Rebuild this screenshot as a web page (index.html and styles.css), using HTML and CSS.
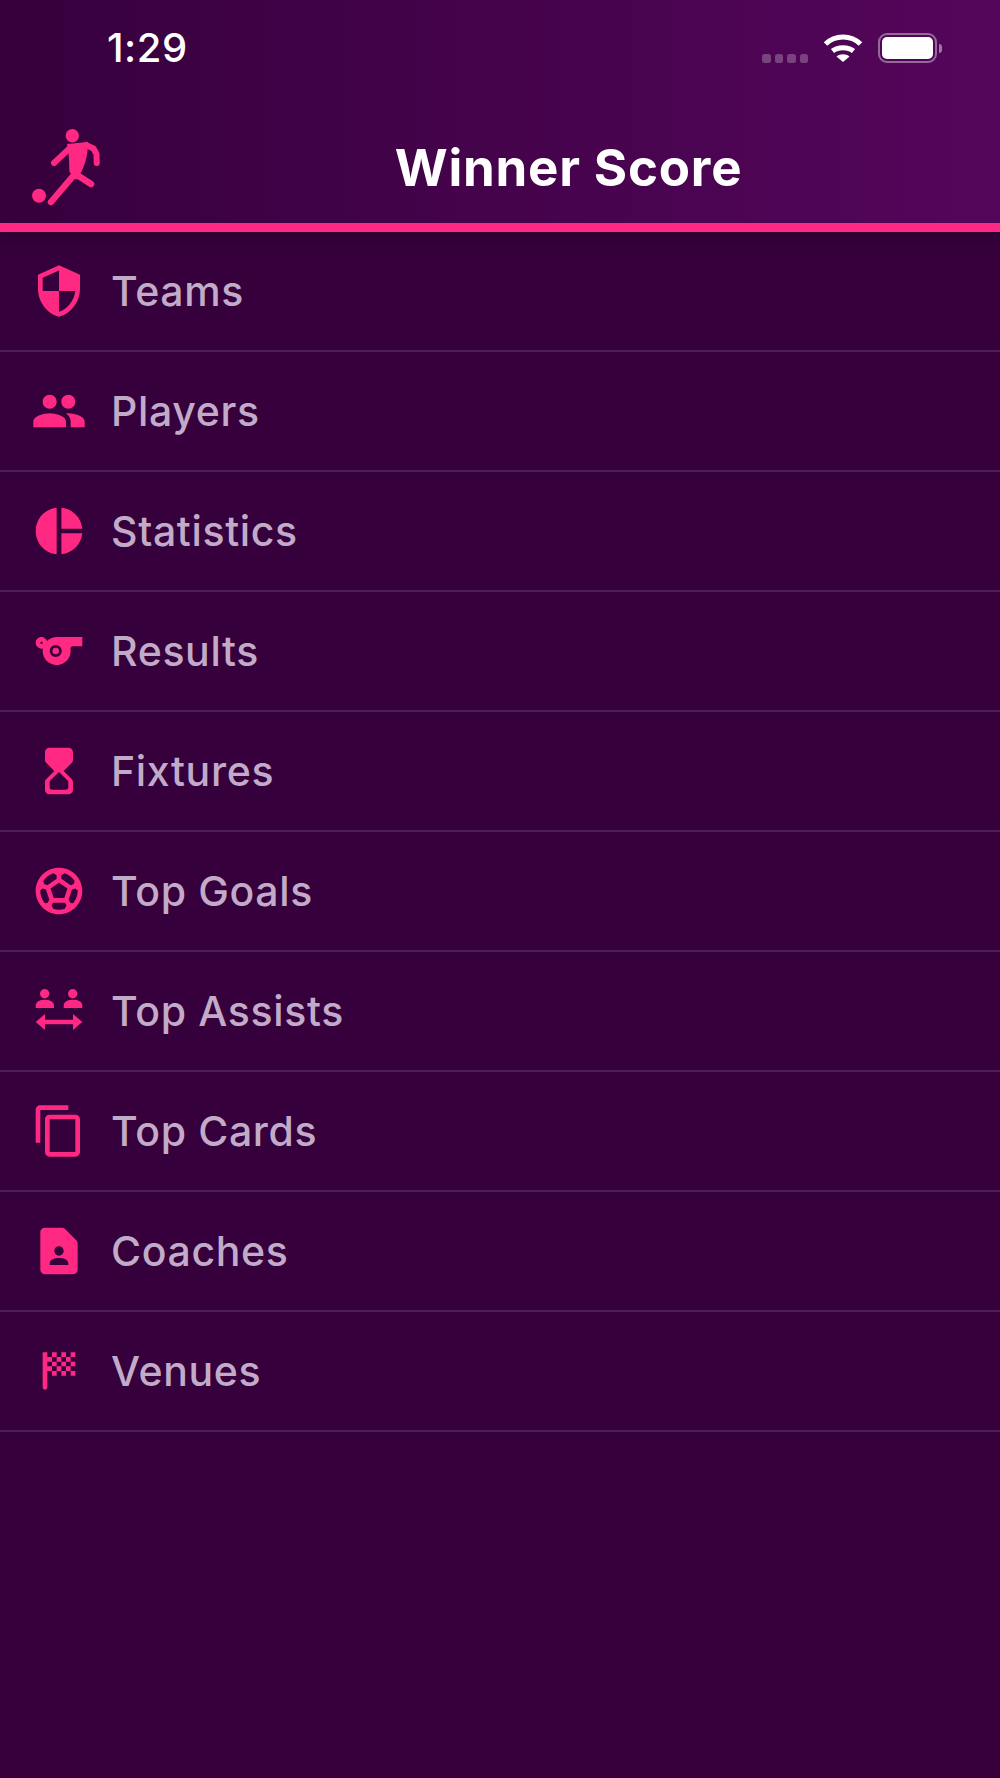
FILE: index.html
```
<!DOCTYPE html>
<html lang="en">
<head>
    <meta charset="UTF-8" />
    <meta name="viewport" content="width=device-width, initial-scale=1.0" />
    <title>Winner Score</title>
    <link rel="stylesheet" href="styles.css">
</head>
<body>

<!-- Header -->
<header class="app-header">
    <div class="status-bar">
        <span class="status-time">1:29</span>
        <div class="status-icons">
            <div class="signal-dots"><i></i><i></i><i></i><i></i></div>
            <svg class="wifi" viewBox="0 0 40 29">
                <path class="wifi-arc" d="M2.5 11C12 1.5 28 1.5 37.5 11"></path>
                <path class="wifi-arc" d="M9.5 18C15 13.5 25 13.5 30.5 18"></path>
                <path class="fill-white" d="M20 29L13.5 23.5C17 20.5 23 20.5 26.5 23.5Z"></path>
            </svg>
            <div class="battery"><div class="battery-level"></div></div>
            <div class="battery-nub"></div>
        </div>
    </div>
    <div class="title-bar">
        <svg class="logo" viewBox="0 0 100 110">
            <circle cx="52.3" cy="25.7" r="6.7"></circle>
            <circle cx="19" cy="85.7" r="7"></circle>
            <path d="M47 34L68 32C68 45 65 59 56 70L49.5 62C49 54 49.5 46 47 34Z"></path>
            <path class="logo-limb" d="M50 38L34 53"></path>
            <path class="logo-limb" d="M66 35L73.5 38.5L76.5 44L76.7 53"></path>
            <path class="logo-limb logo-leg" d="M54 65L31 92"></path>
            <path class="logo-limb logo-leg" d="M57 65L71 74"></path>
        </svg>
        <h1>Winner Score</h1>
    </div>
</header>

<!-- Menu -->
<ul class="menu">
    <li class="menu-item">
        <svg class="menu-icon" viewBox="0 0 24 24"><path d="M12 1L3 5v6c0 5.55 3.84 10.74 9 12 5.16-1.26 9-6.45 9-12V5l-9-4zm0 10.99h7c-.53 4.12-3.28 7.79-7 8.94V12H5V6.3l7-3.11v8.8z"></path></svg>
        <span>Teams</span>
    </li>
    <li class="menu-item">
        <svg class="menu-icon" viewBox="0 0 24 24"><path d="M16 11c1.66 0 2.99-1.34 2.99-3S17.66 5 16 5c-1.66 0-3 1.34-3 3s1.34 3 3 3zm-8 0c1.66 0 2.99-1.34 2.99-3S9.66 5 8 5C6.34 5 5 6.34 5 8s1.34 3 3 3zm0 2c-2.33 0-7 1.17-7 3.5V19h14v-2.5c0-2.33-4.67-3.5-7-3.5zm8 0c-.29 0-.62.02-.97.05 1.16.84 1.97 1.97 1.97 3.45V19h6v-2.5c0-2.33-4.67-3.5-7-3.5z"></path></svg>
        <span>Players</span>
    </li>
    <li class="menu-item">
        <svg class="menu-icon" viewBox="0 0 24 24"><path d="M11 2v20c-5.07-.5-9-4.79-9-10s3.93-9.5 9-10zm2.03 0v8.99H22c-.47-4.74-4.24-8.52-8.97-8.99zm0 11.01V22c4.74-.47 8.5-4.25 8.97-8.99h-8.97z"></path></svg>
        <span>Statistics</span>
    </li>
    <li class="menu-item">
        <svg class="menu-icon" viewBox="0 0 24 24"><path d="M11.23 6C9.57 6 8.01 6.66 6.87 7.73 6.54 6.73 5.61 6 4.5 6 3.12 6 2 7.12 2 8.5S3.12 11 4.5 11c.21 0 .41-.03.61-.08-.05.25-.09.51-.1.78-.18 3.68 2.95 6.68 6.68 6.27 2.55-.28 4.68-2.26 5.19-4.77.15-.71.15-1.4.06-2.06-.09-.6.38-1.13.99-1.13H22V6H11.23zM4.5 9c-.28 0-.5-.22-.5-.5s.22-.5.5-.5.5.22.5.5-.22.5-.5.5zm6.1 5.6a2.6 2.6 0 0 1 0-5.2a2.6 2.6 0 0 1 0 5.2z"></path><circle cx="10.6" cy="12" r="1.4"></circle></svg>
        <span>Results</span>
    </li>
    <li class="menu-item">
        <svg class="menu-icon" viewBox="0 0 24 24"><path d="M8 2c-1.1 0-2 .9-2 2v3.17c0 .53.21 1.04.59 1.42L10 12l-3.42 3.42c-.37.38-.58.89-.58 1.42V20c0 1.1.9 2 2 2h8c1.1 0 2-.9 2-2v-3.16c0-.53-.21-1.04-.58-1.41L14 12l3.41-3.4c.38-.38.59-.89.59-1.42V4c0-1.1-.9-2-2-2H8zm8 14.83V19c0 .55-.45 1-1 1H9c-.55 0-1-.45-1-1v-2.17c0-.27.11-.52.29-.71L12 12.41l3.71 3.71c.18.19.29.44.29.71z"></path></svg>
        <span>Fixtures</span>
    </li>
    <li class="menu-item">
        <svg class="menu-icon" viewBox="0 0 24 24"><path d="M12 2C6.48 2 2 6.48 2 12s4.48 10 10 10 10-4.48 10-10S17.52 2 12 2zm1 3.3l1.35-.95c1.82.56 3.37 1.76 4.38 3.34l-.39 1.34-1.35.46L13 6.7V5.3zm-3.35-.95L11 5.3v1.4L7.01 9.49l-1.35-.46-.39-1.34c1.01-1.57 2.56-2.77 4.38-3.34zM7.08 17.11l-1.14.1C4.73 15.81 4 13.99 4 12c0-.12.01-.23.02-.35l1-.73 1.38.48 1.46 4.34-.78 1.37zm7.42 2.48c-.79.26-1.63.41-2.5.41s-1.71-.15-2.5-.41l-.69-1.49.64-1.1h5.11l.64 1.11-.7 1.48zM14.27 15H9.73l-1.35-4.02L12 8.44l3.63 2.54L14.27 15zm3.79 2.21l-1.14-.1-.79-1.37 1.46-4.34 1.39-.47 1 .73c.01.11.02.22.02.34 0 1.99-.73 3.81-1.94 5.21z"></path></svg>
        <span>Top Goals</span>
    </li>
    <li class="menu-item">
        <svg class="menu-icon" viewBox="2 2 56 56">
            <circle cx="15.7" cy="12.7" r="4.7"></circle>
            <circle cx="43.7" cy="12.7" r="4.7"></circle>
            <path d="M6.7 27V24.5C6.7 20.5 11 18.7 15.8 18.7S25 20.5 25 24.5V27Z"></path>
            <path d="M34.7 27V24.5C34.7 20.5 39 18.7 44 18.7S53.3 20.5 53.3 24.5V27Z"></path>
            <path d="M6.7 41L16 33V38.8H44V33L53.3 41L44 49V43.3H16V49Z"></path>
        </svg>
        <span>Top Assists</span>
    </li>
    <li class="menu-item">
        <svg class="menu-icon" viewBox="0 0 24 24"><path d="M16 1H4c-1.1 0-2 .9-2 2v14h2V3h12V1zm3 4H8c-1.1 0-2 .9-2 2v14c0 1.1.9 2 2 2h11c1.1 0 2-.9 2-2V7c0-1.1-.9-2-2-2zm0 16H8V7h11v14z"></path></svg>
        <span>Top Cards</span>
    </li>
    <li class="menu-item">
        <svg class="menu-icon" viewBox="0 0 24 24"><path d="M13.17 2H6c-1.1 0-2 .9-2 2v16c0 1.1.9 2 2 2h12c1.1 0 2-.9 2-2V8.83c0-.53-.21-1.04-.59-1.42l-4.82-4.82C14.21 2.21 13.7 2 13.17 2zM12 10c1.1 0 2 .9 2 2s-.9 2-2 2-2-.9-2-2 .9-2 2-2zm4 8H8v-.57c0-.81.48-1.53 1.22-1.85.85-.37 1.79-.58 2.78-.58.99 0 1.93.21 2.78.58.74.32 1.22 1.04 1.22 1.85V18z"></path></svg>
        <span>Coaches</span>
    </li>
    <li class="menu-item">
        <svg class="menu-icon" viewBox="0 0 24 24"><path d="M11 6H9V4h2v2zm4-2h-2v2h2V4zM9 14h2v-2H9v2zm10-4V8h-2v2h2zm0 4v-2h-2v2h2zm-6 0h2v-2h-2v2zm6-10h-2v2h2V4zm-6 4V6h-2v2h2zM7 10V8h2V6H7V4H5v15c0 .55.45 1 1 1s1-.45 1-1V12h2v-2H7zm8 2h2v-2h-2v2zm-4-2v2h2v-2h-2zM9 8v2h2V8H9zm4 2h2V8h-2v2zm2-4v2h2V6h-2z"></path></svg>
        <span>Venues</span>
    </li>
</ul>

</body>
</html>
```

FILE: styles.css
```
body, html {
    margin: 0;
    padding: 0;
    width: 100%;
    height: 100%;
    font-family: 'Inter', 'Liberation Sans', sans-serif;
    background-color: #36003c;
    overflow: hidden;
}

/* Header */
.app-header {
    height: 223px;
    background: linear-gradient(90deg, #36003c 0%, #54065b 100%);
    border-bottom: 9px solid #ff2882;
    box-shadow: 0 4px 10px rgba(0, 0, 0, 0.25);
    position: relative;
    display: flex;
    flex-direction: column;
}

.status-bar {
    height: 96px;
    display: flex;
    justify-content: space-between;
    padding: 0 58px 0 107px;
}

.status-time {
    color: #fff;
    font-size: 40px;
    font-weight: 500;
    line-height: 95px;
    letter-spacing: 0.5px;
}

.status-icons {
    display: flex;
    align-items: flex-start;
    padding-top: 33px;
}

.signal-dots {
    display: flex;
    gap: 4px;
    margin-top: 21px;
    margin-right: 15px;
}

.signal-dots i {
    width: 8.5px;
    height: 8.5px;
    border-radius: 2.5px;
    background-color: rgba(255, 255, 255, 0.25);
}

.wifi {
    width: 40px;
    height: 29px;
    margin-right: 15px;
}

.wifi-arc {
    fill: none;
    stroke: #fff;
    stroke-width: 5;
}

.fill-white {
    fill: #fff;
}

.battery {
    width: 59px;
    height: 30px;
    box-sizing: border-box;
    border: 2.5px solid rgba(255, 255, 255, 0.4);
    border-radius: 9px;
    padding: 2px;
}

.battery-level {
    height: 100%;
    background-color: #fff;
    border-radius: 5px;
}

.battery-nub {
    width: 3px;
    height: 9px;
    margin: 11px 0 0 2px;
    background-color: rgba(255, 255, 255, 0.45);
    border-radius: 0 3px 3px 0;
}

.title-bar {
    flex: 1;
    display: flex;
    align-items: center;
    padding: 15px 0 0 20px;
}

.logo {
    width: 100px;
    height: 110px;
    flex: none;
    margin-bottom: 4px;
    fill: #ff2882;
}

.logo-limb {
    fill: none;
    stroke: #ff2882;
    stroke-width: 6;
    stroke-linecap: round;
    stroke-linejoin: round;
}

.logo-leg {
    stroke-width: 6.5;
}

.title-bar h1 {
    flex: 1;
    margin: 0;
    padding-left: 17px;
    text-align: center;
    color: #fff;
    font-size: 51px;
    font-weight: 700;
    letter-spacing: 0.8px;
}

/* Menu */
.menu {
    list-style: none;
    margin: 0;
    padding: 0;
}

.menu-item {
    height: 120px;
    box-sizing: border-box;
    border-bottom: 2px solid #4d1f57;
    display: flex;
    align-items: center;
    padding-left: 31px;
    gap: 24px;
    color: #c2abc8;
    font-size: 41px;
    font-weight: 500;
    letter-spacing: 0.65px;
}

.menu-icon {
    width: 56px;
    height: 56px;
    flex: none;
    fill: #ff2882;
}
```
